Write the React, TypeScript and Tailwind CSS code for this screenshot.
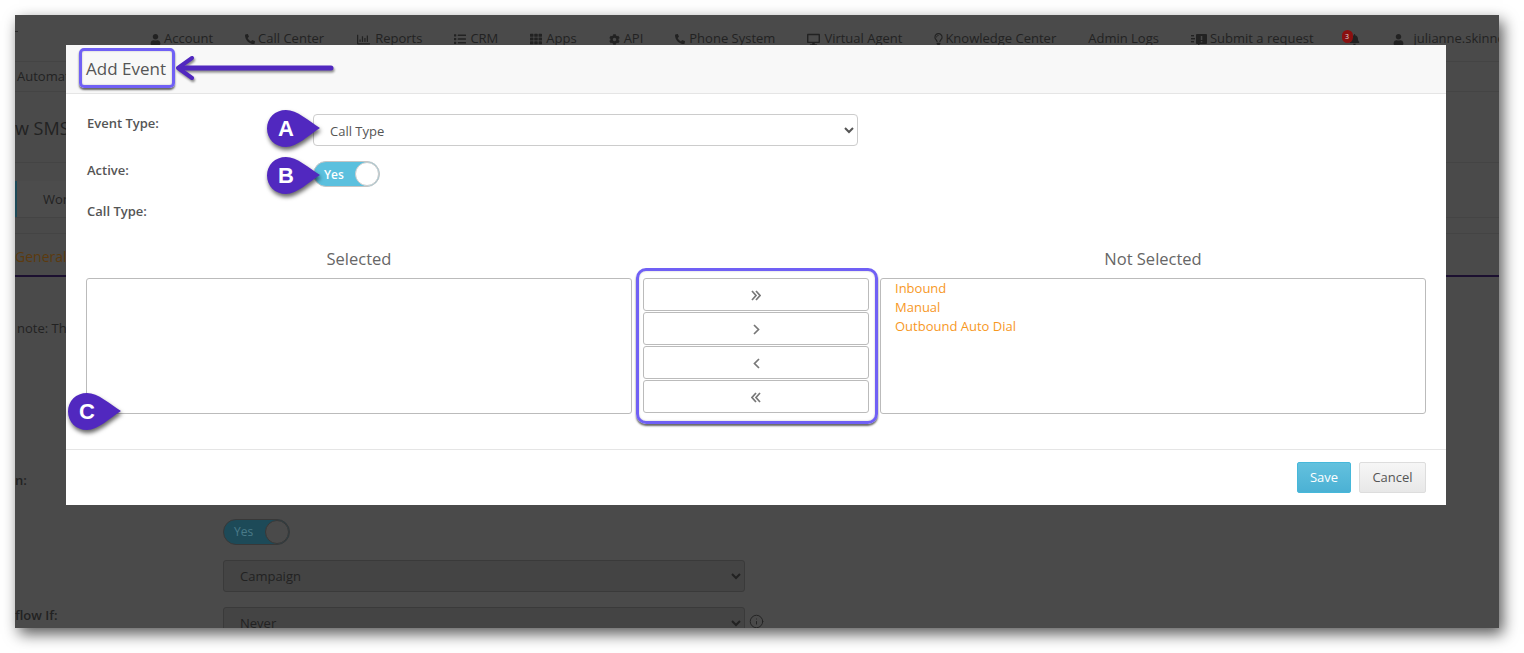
import type { ReactNode } from 'react';
import {
  FaUser, FaPhoneAlt, FaRegChartBar, FaList, FaTh, FaCog, FaDesktop, FaRegLightbulb, FaBell,
} from 'react-icons/fa';
import { Info } from 'lucide-react';

function SubmitIcon() {
  return (
    <svg width="16" height="13" viewBox="0 0 16 13" className="fill-current">
      <rect x="0" y="2" width="3" height="1.4" />
      <rect x="0" y="5" width="4" height="1.4" />
      <rect x="0" y="8" width="3" height="1.4" />
      <path d="M6 1h9a1 1 0 0 1 1 1v8a1 1 0 0 1-1 1H9l-2 2v-2H6a1 1 0 0 1-1-1V2a1 1 0 0 1 1-1z" />
      <rect x="9.8" y="3" width="1.5" height="4" fill="#4a4a4a" />
      <rect x="9.8" y="8" width="1.5" height="1.4" fill="#4a4a4a" />
    </svg>
  );
}

function NavItem({ icon, label, gap = 'gap-1' }: { icon?: ReactNode; label: string; gap?: string }) {
  return (
    <div className={`flex items-center whitespace-nowrap shrink-0 ${gap}`}>
      {icon}
      <span>{label}</span>
    </div>
  );
}

// dimmed page that sits behind the modal
function BackgroundPage() {
  return (
    <div className="relative w-[1484px] h-[613px] overflow-hidden bg-[#4a4a4a] text-[#222] text-[13px]">
      <div className="absolute left-0 top-[16px] w-[3px] h-px bg-[#2a2a2a]" />
      <div className="h-[47px] flex items-center pl-[135px] pt-[2px] gap-8 border-b border-[#444]">
        <NavItem icon={<FaUser className="w-[11px] h-[11px]" />} label="Account" gap="gap-[3px]" />
        <NavItem icon={<FaPhoneAlt className="w-[10px] h-[10px]" />} label="Call Center" gap="gap-[3px]" />
        <NavItem icon={<FaRegChartBar className="w-[15px] h-[13px]" />} label="Reports" />
        <NavItem icon={<FaList className="w-3 h-3" />} label="CRM" />
        <NavItem icon={<FaTh className="w-3 h-3" />} label="Apps" />
        <NavItem icon={<FaCog className="w-[11px] h-[11px]" />} label="API" />
        <NavItem icon={<FaPhoneAlt className="w-[10px] h-[10px]" />} label="Phone System" />
        <NavItem icon={<FaDesktop className="w-[13px] h-[13px]" />} label="Virtual Agent" />
        <NavItem icon={<FaRegLightbulb className="w-[9px] h-3" />} label="Knowledge Center" gap="gap-[2px]" />
        <NavItem label="Admin Logs" />
        <NavItem icon={<SubmitIcon />} label="Submit a request" gap="gap-[3px]" />
        <div className="relative shrink-0 -ml-1 mr-px w-[18px] h-4 flex justify-end items-center">
          <FaBell className="w-[11px] h-[11px]" />
          <span className="absolute left-0 -top-[1px] w-[11px] h-[13px] rounded-full bg-[#8a1010] text-[7px] leading-[13px] text-center text-[#ddd]">3</span>
        </div>
        <NavItem icon={<FaUser className="w-[11px] h-[11px]" />} label="julianne.skinner" gap="gap-[10px]" />
      </div>
      <div className="h-[30px] flex items-center pl-[2px] border-b border-[#444]">Automation</div>
      <div className="h-[71px] flex items-center pt-[2px] text-[18px] border-b border-[#444]">w SMS</div>
      <div className="h-[55px] flex items-end border-b border-[#444]">
        <div className="h-[36px] w-[120px] border-l-2 border-[#1d4a58] bg-[#4c4c4c] pl-[26px] pt-[2px] flex items-center">Workflow</div>
      </div>
      <div className="h-4 border-b border-[#444]" />
      <div className="h-[43px] flex items-center pt-[3px] text-[14px] text-[#5c3a0e] border-b-2 border-[#1c1030]">General</div>
      <div className="mt-[42px] h-[18px] leading-[18px] pl-[2px]">note: The</div>
      <div className="mt-[134px] h-[18px] leading-[18px] font-semibold">n:</div>
      <div className="ml-[208px] mt-[30px] w-[67px] h-[26px] rounded-full bg-[#1d4a58] border border-[#383838] flex items-center justify-between pl-[10px] text-[12px] text-[#4a7a88]">
        Yes
        <span className="w-[24px] h-[24px] rounded-full bg-[#4a4a4a] border border-[#383838]" />
      </div>
      <select className="block ml-[208px] mt-[15px] w-[522px] h-[32px] bg-[#444] border border-[#3a3a3a] rounded-[3px] pl-[12px] text-[13px]">
        <option>Campaign</option>
      </select>
      <div className="flex items-start mt-[15px]">
        <div className="w-[208px] -mt-px leading-[18px] font-semibold">flow If:</div>
        <select className="w-[522px] h-[32px] bg-[#444] border border-[#3a3a3a] rounded-[3px] pl-[12px] text-[13px]">
          <option>Never</option>
        </select>
        <Info className="w-[15px] h-[15px] ml-[4px] mt-[7px]" strokeWidth={1.5} />
      </div>
    </div>
  );
}

// chevrons are narrower and taller than the icon-font ones, so they are drawn here
function Chevrons({ d, width }: { d: string; width: number }) {
  return (
    <svg width={width} height="11" viewBox={`0 0 ${width} 11`} fill="none" stroke="#777" strokeWidth="1.7">
      <path d={d} />
    </svg>
  );
}

function MoveButton({ children }: { children: ReactNode }) {
  return (
    <button className="h-[33px] w-full bg-white border border-[#bbb] rounded-[3px] pt-px flex items-center justify-center">
      {children}
    </button>
  );
}

function AddEventModal() {
  return (
    <div className="absolute left-[66px] top-[45px] w-[1380px] h-[460px] bg-white flex flex-col text-[#555] text-[13px]">
      <div className="h-[49px] shrink-0 bg-[#f8f8f8] border-b border-[#e5e5e5] flex items-center pl-[20px] text-[17px]">
        Add Event
      </div>
      <div className="flex-1 px-[20px] pt-[20px]">
        <div className="flex items-start">
          <label className="w-[227px] pl-px leading-[18px] font-semibold">Event Type:</label>
          <select className="w-[545px] h-[32px] bg-white border border-[#ccc] rounded-[4px] pl-[12px] pt-px text-[13px] text-[#555]">
            <option>Call Type</option>
          </select>
        </div>
        <div className="flex items-start mt-[15px]">
          <label className="w-[227px] pl-px leading-[18px] font-semibold">Active:</label>
          <div className="w-[67px] h-[26px] rounded-full bg-[#5bc0de] border border-[#c5c5c5] flex items-center justify-between pl-[10px] text-[12px] font-semibold text-white">
            <span className="pt-px">Yes</span>
            <span className="w-[24px] h-[24px] rounded-full bg-white border border-[#ccc]" />
          </div>
        </div>
        <div className="mt-[15px] pl-px h-[18px] leading-[18px] font-semibold">Call Type:</div>
        <div className="mt-[27px] grid grid-cols-[546px_226px_546px] gap-x-[11px]">
          <div className="h-[24px] leading-[24px] text-center text-[16.5px] text-[#666]">Selected</div>
          <div />
          <div className="h-[24px] leading-[24px] text-center text-[16.5px] text-[#666]">Not Selected</div>
          <div className="mt-[7px] h-[136px] border border-[#bbb] rounded-[3px]" />
          <div className="mt-[7px] flex flex-col gap-px">
            <MoveButton><Chevrons width={10} d="M1 1l4 4.5L1 10M5 1l4 4.5L5 10" /></MoveButton>
            <MoveButton><Chevrons width={7} d="M1 1l4.5 4.5L1 10" /></MoveButton>
            <MoveButton><Chevrons width={7} d="M6 1L1.5 5.5L6 10" /></MoveButton>
            <MoveButton><Chevrons width={10} d="M5 1L1 5.5L5 10M9 1L5 5.5L9 10" /></MoveButton>
          </div>
          <div className="mt-[7px] h-[136px] border border-[#bbb] rounded-[3px] pl-[14px] text-[#f7981f] leading-[19px]">
            <div>Inbound</div>
            <div>Manual</div>
            <div>Outbound Auto Dial</div>
          </div>
        </div>
      </div>
      <div className="h-[56px] shrink-0 border-t border-[#e5e5e5] flex items-center justify-end gap-2 pr-[20px]">
        <button className="w-[54px] h-[31px] rounded-[2px] border border-[#46b8da] bg-gradient-to-b from-[#63c1de] to-[#4bb1d4] text-white">Save</button>
        <button className="w-[67px] h-[31px] rounded-[2px] border border-[#ddd] bg-gradient-to-b from-[#f6f6f6] to-[#e8e8e8] text-[#555]">Cancel</button>
      </div>
    </div>
  );
}

function Callout({ letter, className }: { letter: string; className: string }) {
  return (
    <div className={`absolute w-[54px] h-[38px] ${className}`}>
      <svg width="54" height="38" viewBox="0 0 54 38" className="drop-shadow-[1px_3px_2px_rgba(0,0,0,0.6)]">
        <path d="M19 0C30 0 42 11 53 18C42 25 30 37 19 37C8 37 0 29 0 18.5C0 8 8 0 19 0Z" fill="#5128bf" />
      </svg>
      <span className="absolute left-0 top-0 w-[38px] h-[37px] text-center text-[22px] font-bold leading-[37px] text-white font-['Liberation_Sans',sans-serif]">{letter}</span>
    </div>
  );
}

export default function App() {
  return (
    <div className="relative w-[1524px] h-[653px] overflow-hidden bg-white p-[15px] font-['Open_Sans',sans-serif]">
      <div className="w-[1484px] shadow-[4px_6px_14px_rgba(0,0,0,0.65)]">
        <BackgroundPage />
      </div>
      <AddEventModal />

      {/* annotations on top of the screenshot */}
      <div className="absolute left-[79px] top-[48px] w-[96px] h-[40px] border-[3px] border-[#7060f5] rounded-[5px] shadow-[0_2px_2px_rgba(0,0,0,0.6),inset_0_0_2px_rgba(0,0,0,0.25)]" />
      <svg width="162" height="28" viewBox="0 0 162 28" className="absolute left-[174px] top-[54px] drop-shadow-[1px_2px_1px_rgba(0,0,0,0.45)]">
        <path d="M157 14H8" stroke="#5128bf" strokeWidth="5" strokeLinecap="round" fill="none" />
        <path d="M18 4L4 14L18 24" stroke="#5128bf" strokeWidth="4" strokeLinecap="round" strokeLinejoin="round" fill="none" />
      </svg>
      <div className="absolute left-[636px] top-[268px] w-[242px] h-[156px] border-[3px] border-[#7060f5] rounded-[10px] shadow-[0_2px_2px_rgba(0,0,0,0.6),inset_0_0_2px_rgba(0,0,0,0.25)]" />
      <Callout letter="A" className="left-[267px] top-[110px]" />
      <Callout letter="B" className="left-[267px] top-[157px]" />
      <Callout letter="C" className="left-[68px] top-[393px]" />
    </div>
  );
}
